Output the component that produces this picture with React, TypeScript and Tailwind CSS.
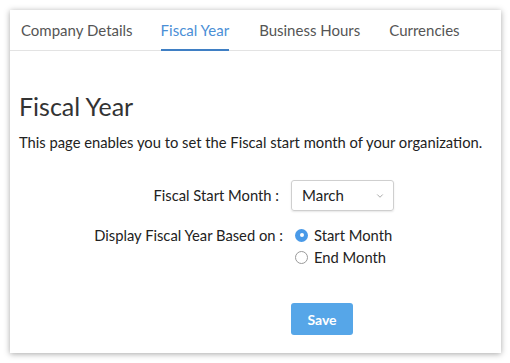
import { ChevronDown } from "lucide-react";

const tabs = [
  { label: "Company Details", gap: "" },
  { label: "Fiscal Year", gap: "ml-[28px]" },
  { label: "Business Hours", gap: "ml-[30px]" },
  { label: "Currencies", gap: "ml-[29px]" },
];

export default function App() {
  return (
    <div className="w-[510px] h-[363px] bg-white p-[10px] font-['Lato','Liberation_Sans',sans-serif]">
      <div className="w-[491px] h-[343px] bg-white shadow-[0_1px_6px_rgba(0,0,0,0.35)] flex flex-col">
        {/* tabs */}
        <div className="flex pl-[11px] h-[41px] border-b border-[#e3e3e3]">
          {tabs.map((t) => (
            <div
              key={t.label}
              className={
                t.label === "Fiscal Year"
                  ? `${t.gap} flex items-center text-[15px] text-[#4a8fd6] border-b-2 border-[#3f7fc4] mb-[-1px] pt-[2px]`
                  : `${t.gap} flex items-center text-[15px] text-[#555]`
              }
            >
              {t.label}
            </div>
          ))}
        </div>

        <div className="pl-[9px] pt-[40px]">
          <h1 className="text-[25px] leading-[30px] text-[#333]">Fiscal Year</h1>
          <p className="mt-[11px] text-[14.75px] leading-[20px] text-[#222]">
            This page enables you to set the Fiscal start month of your organization.
          </p>

          <div className="mt-[28px] grid grid-cols-[264px_auto] gap-x-[8px] items-center text-[14.75px] text-[#222]">
            <div className="text-right pr-[4px]">Fiscal Start Month :</div>
            <div className="w-[103px] h-[31px] border border-[#cfcfcf] rounded-[3px] shadow-[0_1px_2px_rgba(0,0,0,0.1)] flex items-center justify-between pl-[10px] pr-[8px] text-[15px] text-[#222]">
              <span>March</span>
              <ChevronDown size={10} strokeWidth={1.5} className="text-[#777]" />
            </div>

            <div className="mt-[14px] self-start text-right leading-[20px]">
              Display Fiscal Year Based on :
            </div>
            <div className="mt-[14px] flex flex-col gap-[2px] leading-[20px]">
              <label className="flex items-center gap-[6px] pl-[4px]">
                <span className="w-[13px] h-[13px] rounded-full bg-[#4a9ae8] flex items-center justify-center">
                  <span className="w-[4px] h-[4px] rounded-full bg-white" />
                </span>
                Start Month
              </label>
              <label className="flex items-center gap-[6px] pl-[4px]">
                <span className="w-[13px] h-[13px] rounded-full border border-[#9a9a9a] bg-white" />
                End Month
              </label>
            </div>

            <div />
            <button className="mt-[36px] w-[62px] h-[32px] rounded-[3px] bg-[#56a6e8] text-white text-[14px] font-bold">
              Save
            </button>
          </div>
        </div>
      </div>
    </div>
  );
}
